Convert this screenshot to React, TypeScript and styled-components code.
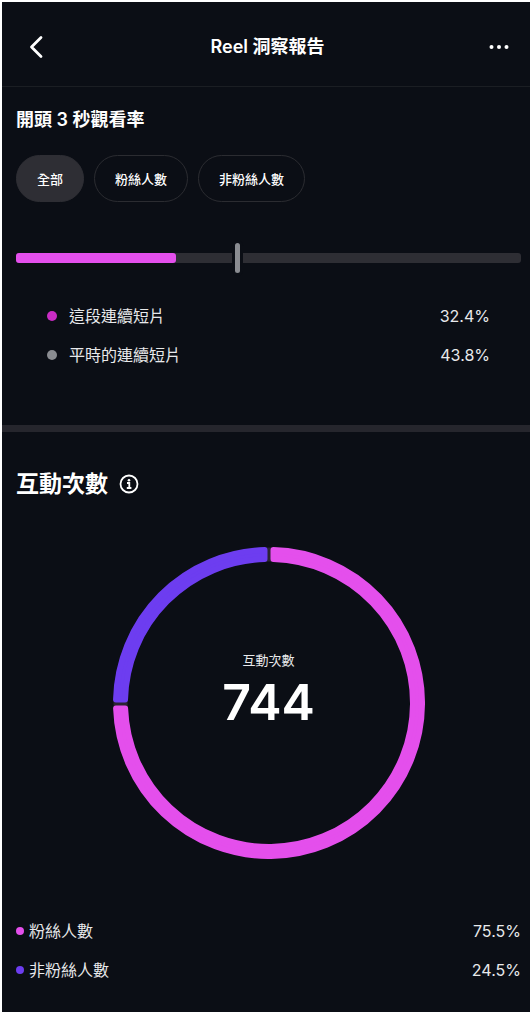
import React, { useState } from "react";
import styled, { createGlobalStyle } from "styled-components";

const color = {
  page: "#0b0e15",
  text: "#e8e9eb",
  strong: "#ffffff",
  surface: "#2e2e34",
  line: "#1b1e23",
  divider: "#26262d",
  pink: "#e44fec",
  magenta: "#c92cc4",
  violet: "#6d3df0",
  gray: "#8a8c91",
};

const GlobalStyle = createGlobalStyle`
  *, *::before, *::after { box-sizing: border-box; }
  body {
    margin: 0;
    background: #ffffff;
    color: ${color.text};
    font-family: Inter, "Noto Sans CJK TC", sans-serif;
    font-size: 16px;
  }
  h1, h2, dl, dd { margin: 0; }
`;

const Page = styled.div`
  min-height: 100vh;
  border-top: 2px solid #ffffff;
  border-left: 2px solid #ffffff;
  background: ${color.page};
  background-clip: padding-box;
`;

const Header = styled.header`
  display: grid;
  grid-template-columns: 1fr auto 1fr;
  align-items: center;
  height: 85px;
  padding: 6px 9px 0 12px;
  border-bottom: 1px solid ${color.line};
`;

const Title = styled.h1`
  color: ${color.strong};
  font-size: 18px;
  font-weight: 600;
  line-height: 24px;
`;

const IconButton = styled.button<{ $end?: boolean }>`
  display: flex;
  align-items: center;
  justify-content: center;
  justify-self: ${(p) => (p.$end ? "end" : "start")};
  width: 44px;
  height: 44px;
  padding: 0;
  border: 0;
  background: none;
  color: ${color.strong};
  cursor: pointer;
`;

const Section = styled.section<{ $first?: boolean }>`
  padding: ${(p) => (p.$first ? "21px 9px 58px 14px" : "36px 9px 26px 14px")};
`;

const SectionTitle = styled.h2<{ $large?: boolean }>`
  display: flex;
  align-items: center;
  gap: 11px;
  color: ${color.strong};
  font-size: ${(p) => (p.$large ? "23px" : "18px")};
  font-weight: 600;
  line-height: ${(p) => (p.$large ? "32px" : "24px")};
`;

const InfoButton = styled.button`
  display: flex;
  padding: 0;
  border: 0;
  background: none;
  color: ${color.strong};
  cursor: pointer;
`;

const Chips = styled.div`
  display: flex;
  flex-wrap: wrap;
  gap: 10px;
  margin-top: 23px;
`;

const Chip = styled.button<{ $active: boolean }>`
  height: 47px;
  padding: 0 20px;
  border: 1px solid ${(p) => (p.$active ? color.surface : "#2b2c31")};
  border-radius: 24px;
  background: ${(p) => (p.$active ? color.surface : "transparent")};
  color: ${color.strong};
  font: inherit;
  font-size: 13px;
  font-weight: 500;
  cursor: pointer;
`;

const Track = styled.div`
  position: relative;
  height: 10px;
  margin-top: 51px;
  border-radius: 3px;
  background: ${color.surface};
`;

const Fill = styled.div`
  height: 100%;
  border-radius: 3px;
  background: ${color.pink};
`;

const Marker = styled.div`
  position: absolute;
  top: -10px;
  width: 5px;
  height: 30px;
  margin-left: -2px;
  border-radius: 3px;
  background: ${color.gray};
  box-shadow: 0 0 0 3px ${color.page};
`;

const Legend = styled.dl<{ $inset?: boolean }>`
  display: flex;
  flex-direction: column;
  gap: 15px;
  margin-top: ${(p) => (p.$inset ? "41px" : "60px")};
  padding: ${(p) => (p.$inset ? "0 31px" : "0")};
`;

const LegendRow = styled.div`
  display: flex;
  align-items: center;
  justify-content: space-between;
  line-height: 24px;
`;

const LegendLabel = styled.dt<{ $gap: number }>`
  display: flex;
  align-items: center;
  gap: ${(p) => p.$gap}px;
`;

const Dot = styled.span<{ $color: string; $size: number }>`
  width: ${(p) => p.$size}px;
  height: ${(p) => p.$size}px;
  border-radius: 50%;
  background: ${(p) => p.$color};
`;

const Divider = styled.hr`
  height: 7px;
  margin: 0;
  border: 0;
  background: ${color.divider};
`;

const Chart = styled.div`
  display: grid;
  place-items: center;
  margin-top: 47px;
  > * { grid-area: 1 / 1; }
`;

const Ring = styled.svg`
  display: block;
  width: 312px;
  max-width: 100%;
`;

const ChartCaption = styled.div`
  display: flex;
  flex-direction: column;
  align-items: center;
  padding-bottom: 22px;
`;

const CaptionLabel = styled.span`
  font-size: 13px;
  line-height: 20px;
`;

const CaptionValue = styled.strong`
  color: ${color.strong};
  font-size: 50px;
  font-weight: 600;
  line-height: 64px;
`;

const CENTER = 156;
const CORNER = 3;
const OUTER = 156 - CORNER;
const INNER = 141 + CORNER;
const HALF_GAP = 1.5;

/* Ring sector between two turns (0..1, clockwise from the top); the round-joined stroke softens its corners. */
function sectorPath(from: number, to: number) {
  const point = (turn: number, radius: number, side: number) => {
    const angle = turn * Math.PI * 2 + side * Math.asin((HALF_GAP + CORNER) / radius);
    return `${(CENTER + radius * Math.sin(angle)).toFixed(2)} ${(CENTER - radius * Math.cos(angle)).toFixed(2)}`;
  };
  const large = to - from > 0.5 ? 1 : 0;
  return [
    `M${point(from, OUTER, 1)}`,
    `A${OUTER} ${OUTER} 0 ${large} 1 ${point(to, OUTER, -1)}`,
    `L${point(to, INNER, -1)}`,
    `A${INNER} ${INNER} 0 ${large} 0 ${point(from, INNER, 1)}`,
    "Z",
  ].join(" ");
}

const sectors = [
  { from: 0, to: 0.749, color: color.pink },
  { from: 0.749, to: 1, color: color.violet },
];

const filters = ["全部", "粉絲人數", "非粉絲人數"];

const viewRates = [
  { label: "這段連續短片", value: 32.4, color: color.magenta },
  { label: "平時的連續短片", value: 43.8, color: color.gray },
];

const audience = [
  { label: "粉絲人數", value: 75.5, color: color.pink },
  { label: "非粉絲人數", value: 24.5, color: color.violet },
];

function LegendList({ items, inset }: { items: typeof audience; inset?: boolean }) {
  return (
    <Legend $inset={inset}>
      {items.map((item) => (
        <LegendRow key={item.label}>
          <LegendLabel $gap={inset ? 12 : 5}>
            <Dot $color={item.color} $size={inset ? 10 : 8} />
            {item.label}
          </LegendLabel>
          <dd>{item.value}%</dd>
        </LegendRow>
      ))}
    </Legend>
  );
}

export default function App() {
  const [active, setActive] = useState(filters[0]);

  return (
    <>
      <GlobalStyle />
      <Page>
        <Header>
          <IconButton aria-label="返回">
            <svg width="16" height="24" viewBox="0 0 16 24" fill="none" stroke="currentColor" strokeWidth="2.8" strokeLinecap="round" strokeLinejoin="round">
              <path d="M13 2.500 3.500 12l9.500 9.500" />
            </svg>
          </IconButton>
          <Title>Reel 洞察報告</Title>
          <IconButton $end aria-label="更多">
            <svg width="20" height="6" viewBox="0 0 20 6" fill="currentColor">
              <circle cx="2.500" cy="3" r="2" />
              <circle cx="10" cy="3" r="2" />
              <circle cx="17.500" cy="3" r="2" />
            </svg>
          </IconButton>
        </Header>

        <main>
          <Section $first>
            <SectionTitle>開頭 3 秒觀看率</SectionTitle>
            <Chips>
              {filters.map((name) => (
                <Chip key={name} $active={name === active} aria-pressed={name === active} onClick={() => setActive(name)}>
                  {name}
                </Chip>
              ))}
            </Chips>
            <Track>
              <Fill style={{ width: `calc(${viewRates[0].value}% - 4px)` }} />
              <Marker style={{ left: `${viewRates[1].value}%` }} />
            </Track>
            <LegendList items={viewRates} inset />
          </Section>

          <Divider />

          <Section>
            <SectionTitle $large>
              互動次數
              <InfoButton aria-label="說明">
                <svg width="20" height="20" viewBox="0 0 20 20" fill="none" stroke="currentColor">
                  <circle cx="10" cy="10" r="8.500" strokeWidth="1.800" />
                  <path d="M8 9h2.300v4.800M7.800 14h4.600" strokeWidth="1.800" />
                  <circle cx="10" cy="6.200" r="1.300" fill="currentColor" stroke="none" />
                </svg>
              </InfoButton>
            </SectionTitle>
            <Chart>
              <Ring viewBox="0 0 312 312" aria-hidden="true">
                <circle cx={CENTER} cy={CENTER} r="148.500" fill="none" stroke="#2b2432" strokeWidth="14" />
                {sectors.map((s) => (
                  <path key={s.color} d={sectorPath(s.from, s.to)} fill={s.color} stroke={s.color} strokeWidth={CORNER * 2} strokeLinejoin="round" />
                ))}
              </Ring>
              <ChartCaption>
                <CaptionLabel>互動次數</CaptionLabel>
                <CaptionValue>744</CaptionValue>
              </ChartCaption>
            </Chart>
            <LegendList items={audience} />
          </Section>
        </main>
      </Page>
    </>
  );
}
